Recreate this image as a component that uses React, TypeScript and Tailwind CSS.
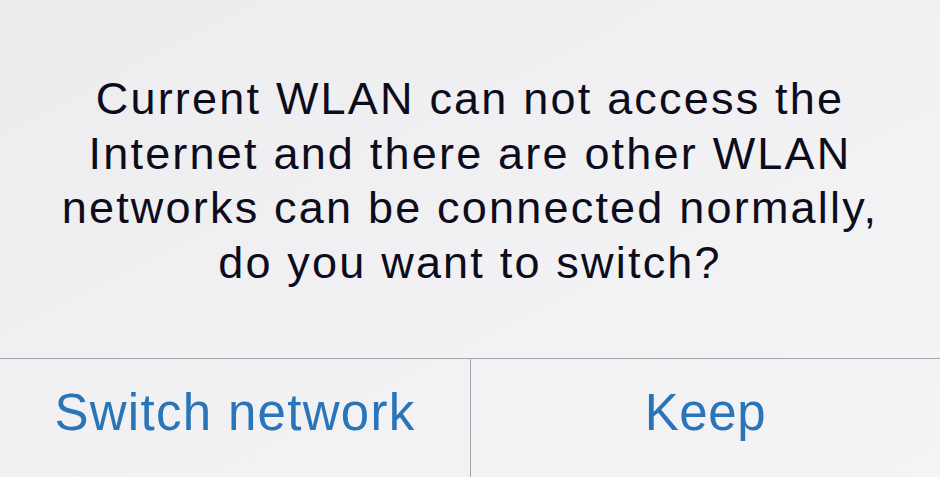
export default function App() {
  return (
    <div className="w-[940px] h-[477px] flex flex-col bg-gradient-to-br from-[#ececee] via-[#f1f0f2] to-[#f4f4f6] font-['Liberation_Sans',Arial,sans-serif] overflow-hidden">
      {/* message */}
      <div className="h-[358px] pt-[72px] text-center text-[45px] leading-[54.5px] tracking-[2.2px] text-[#0c0c1c]">
        Current WLAN can not access the
        <br />
        Internet and there are other WLAN
        <br />
        networks can be connected normally,
        <br />
        do you want to switch?
      </div>

      {/* buttons */}
      <div className="flex flex-1 border-t border-[#a6a5aa]">
        <button className="w-[471px] flex items-center justify-center pb-[10px] border-r border-[#a6a5aa] text-[51px] tracking-[1.3px] text-[#2a74b8]">
          Switch network
        </button>
        <button className="flex-1 flex items-center justify-center pb-[10px] text-[51px] tracking-[0.6px] text-[#2a74b8]">
          Keep
        </button>
      </div>
    </div>
  );
}
